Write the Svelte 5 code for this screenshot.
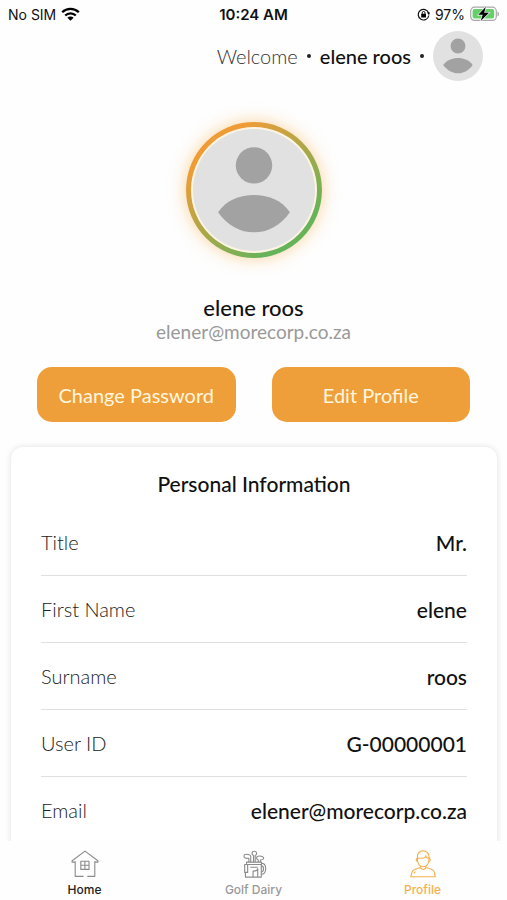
<script lang="ts">
    const user = {
        name: "elene roos",
        email: "elener@morecorp.co.za",
    };

    const details = [
        { label: "Title", value: "Mr." },
        { label: "First Name", value: "elene" },
        { label: "Surname", value: "roos" },
        { label: "User ID", value: "G-00000001" },
        { label: "Email", value: user.email },
    ];
</script>

{#snippet person()}
    <svg class="person" viewBox="0 0 124 124" aria-hidden="true">
        <circle cx="62" cy="62" r="62" fill="#e1e1e1" />
        <circle cx="62" cy="37" r="18.5" fill="#a2a2a2" />
        <path
            d="M25.500 84.500C34 72 48 67 62 67s28 5 36.500 17.500C89 98 76 105 62 105S35 98 25.500 84.500z"
            fill="#a2a2a2"
        />
    </svg>
{/snippet}

<div class="screen">
    <div class="status-bar">
        <div class="status-side">
            <span>No SIM</span>
            <svg width="19" height="14" viewBox="0 0 19 14" aria-hidden="true">
                <g fill="none" stroke="#000" stroke-width="2.300">
                    <path d="M1.200 5.300a11.800 11.800 0 0 1 16.600 0" />
                    <path d="M4.200 8.500a7.500 7.500 0 0 1 10.600 0" />
                </g>
                <path d="M6.400 10.700a4.400 4.400 0 0 1 6.200 0L9.500 13.800z" />
            </svg>
        </div>
        <span class="clock">10:24 AM</span>
        <div class="status-side end">
            <svg width="13" height="13" viewBox="0 0 13 13" aria-hidden="true">
                <path
                    d="M11.800 7.500A5.300 5.300 0 1 1 11.600 5"
                    fill="none"
                    stroke="#111"
                    stroke-width="1.200"
                />
                <path d="M10 4.600h3l-1 2.700z" />
                <rect x="4.200" y="5.800" width="4.800" height="3.600" rx=".5" />
                <path
                    d="M5.200 6V4.900a1.400 1.400 0 0 1 2.800 0V6"
                    fill="none"
                    stroke="#111"
                    stroke-width="1"
                />
            </svg>
            <span>97%</span>
            <svg width="29" height="16" viewBox="0 0 29 16" aria-hidden="true">
                <rect
                    x=".7"
                    y="1.200"
                    width="25.600"
                    height="13.200"
                    rx="3.800"
                    fill="#fff"
                    stroke="#a9a9a9"
                    stroke-width="1.200"
                />
                <rect x="2.600" y="3" width="21.500" height="9.600" rx="2" fill="#65cf69" />
                <path d="M27.500 5.500c2 .8 2 4 0 4.800z" fill="#a9a9a9" />
                <path
                    d="M15.800.8 8.300 8.800h4.400l-2 6.200 8.300-8.200h-4.800z"
                    stroke="#fff"
                    stroke-width="1.200"
                    paint-order="stroke"
                />
            </svg>
        </div>
    </div>

    <header class="welcome">
        <span class="greeting">Welcome</span>
        <span class="dot"></span>
        <span class="welcome-name">{user.name}</span>
        <span class="dot"></span>
        <a class="avatar-small" href="#profile" aria-label="Profile">
            {@render person()}
        </a>
    </header>

    <main>
        <section class="profile">
            <div class="avatar">
                {@render person()}
            </div>
            <h1>{user.name}</h1>
            <p class="email">{user.email}</p>
            <div class="actions">
                <button type="button">Change Password</button>
                <button type="button">Edit Profile</button>
            </div>
        </section>

        <section class="card">
            <h2>Personal Information</h2>
            <dl>
                {#each details as item}
                    <div class="row">
                        <dt>{item.label}</dt>
                        <dd>{item.value}</dd>
                    </div>
                {/each}
            </dl>
        </section>
    </main>

    <nav class="tabs">
        <a class="tab home" href="#home">
            <svg viewBox="0 0 30 30" aria-hidden="true">
                <path d="M4.500 12v16.200h9M17.500 28.200h8V12" />
                <path d="M4.500 13H1.200v-1.500L15 1.200l13.800 10.300V13h-3.300" />
                <path d="M10.500 12h8.800v8.800h-8.800zM14.900 12v8.800M10.500 16.400h8.800" />
            </svg>
            <span>Home</span>
        </a>
        <a class="tab golf" href="#diary">
            <svg viewBox="0 0 30 30" aria-hidden="true">
                <path d="M7 13h16v2.500H7zM5 15.500h3.200v8.500H5zM5.800 24v5h17V15.500" />
                <path d="M22.800 14c4 0 4.700 3 4.700 6s-1 6-4.700 6" />
                <path d="M22.800 17c2 0 2.400 1.500 2.400 3s-.4 3.500-2.400 3.500" />
                <path d="M14 29v-6.500c2 .3 5-.5 5-2.500v9M11 18.500h8" />
                <path d="M9.500 13V9L6 8.700c-2.700-.5-2.200-4.200.5-4.200 2.200 0 5 .8 5 2.500v6" />
                <path d="M14.500 13V6c-2.200-1-2.400-4.600.8-4.600 3 0 3.200 3.400 1 4.600v7" />
                <path d="M19.500 13v-2.500c-2.500-.5-2.500-3.800.5-4 3.200-.3 6.200 1 5.200 3-.5 1.200-2 1.200-3.400 1.200V13" />
            </svg>
            <span>Golf Dairy</span>
        </a>
        <a class="tab active" href="#profile" aria-current="page">
            <svg viewBox="0 0 30 30" aria-hidden="true">
                <path d="M9 9.500V7c0-3.500 2.500-6 6-6s6.500 2.500 6.500 6v2.500c0 5-2.500 8.500-6.300 8.500S9 14.500 9 9.500z" />
                <path d="M9.500 8.800h4c3 0 4.500-1 4.500-2.600 0 1.800 1.500 2.600 3.500 2.600" />
                <path d="M9 9c-1.800 0-1.800 3.500.5 3.500M21.500 9c1.800 0 1.800 3.500-.5 3.500" />
                <path d="M12.500 17v2.500c1.500 1.800 4 1.800 5.500 0V17" />
                <path d="M12 18.800l-6 2C3.500 21.800 2.500 24 2.300 28M18.500 18.800l6 2c2.500 1 3.200 3.200 3.400 7.200" />
                <path d="M1 28.700h28M5.500 25.500c0-1 .5-1.800 1.200-2.300" />
            </svg>
            <span>Profile</span>
        </a>
    </nav>
</div>

<style>
    :global(body) {
        background: #fefefe;
    }

    .screen {
        display: flex;
        flex-direction: column;
        height: 100vh;
        color: #111;
        font-family: Lato, "Open Sans", sans-serif;
    }

    a {
        color: inherit;
        text-decoration: none;
    }

    .status-bar {
        display: flex;
        align-items: center;
        flex-shrink: 0;
        height: 28px;
        padding: 0 8px;
        font-family: Inter, Roboto, sans-serif;
        font-size: 14px;
    }

    .status-side {
        display: flex;
        flex: 1;
        align-items: center;
        gap: 5px;
    }

    .status-side.end {
        justify-content: flex-end;
    }

    .clock {
        font-size: 15px;
        font-weight: 600;
    }

    .welcome {
        display: flex;
        align-items: center;
        justify-content: flex-end;
        flex-shrink: 0;
        gap: 9px;
        height: 56px;
        padding-right: 24px;
        font-size: 20px;
    }

    .greeting {
        color: #333;
        font-weight: 300;
    }

    .welcome-name {
        font-weight: 500;
    }

    .dot {
        width: 4px;
        height: 4px;
        border-radius: 50%;
        background: #222;
    }

    .avatar-small {
        width: 50px;
        height: 50px;
    }

    .person {
        display: block;
        width: 100%;
        height: 100%;
    }

    main {
        flex: 1;
        min-height: 0;
        overflow-y: auto;
        scrollbar-width: none;
    }

    .profile {
        display: flex;
        flex-direction: column;
        align-items: center;
        padding: 38px 37px 25px;
    }

    .avatar {
        box-sizing: border-box;
        width: 136px;
        height: 136px;
        padding: 2px;
        border: 5px solid transparent;
        border-radius: 50%;
        background:
            linear-gradient(#fdf5e4, #fdf5e4) padding-box,
            linear-gradient(140deg, #f09c36 20%, #67b35a 80%) border-box;
        box-shadow: 0 0 16px 1px rgba(250, 180, 80, 0.5);
    }

    h1,
    h2,
    p,
    dl,
    dd {
        margin: 0;
    }

    h1 {
        margin-top: 36px;
        font-size: 22px;
        font-weight: 500;
        line-height: 28px;
    }

    .email {
        color: #999;
        font-size: 19px;
        line-height: 20px;
    }

    .actions {
        display: grid;
        grid-template-columns: 1fr 1fr;
        gap: 36px;
        width: 100%;
        margin-top: 25px;
    }

    button {
        height: 55px;
        padding: 0;
        border: none;
        border-radius: 15px;
        background: #ef9f39;
        color: #fff6df;
        font: inherit;
        font-size: 20px;
        cursor: pointer;
    }

    .card {
        margin: 0 10px 24px 11px;
        padding: 24px 30px;
        border-radius: 12px;
        background: #fff;
        box-shadow: 0 0 6px rgba(0, 0, 0, 0.12);
    }

    h2 {
        margin-bottom: 12px;
        font-size: 21px;
        font-weight: 500;
        line-height: 26px;
        text-align: center;
    }

    .row {
        display: flex;
        align-items: center;
        justify-content: space-between;
        height: 66px;
        border-bottom: 1px solid #e0e0e0;
    }

    .row:last-child {
        border-bottom: none;
    }

    dt {
        color: #222;
        font-size: 20px;
        font-weight: 300;
    }

    dd {
        font-size: 21px;
        font-weight: 500;
    }

    .tabs {
        display: grid;
        grid-template-columns: repeat(3, 1fr);
        flex-shrink: 0;
        height: 59px;
        background: #fefefe;
    }

    .tab {
        display: flex;
        flex-direction: column;
        align-items: center;
        gap: 4px;
        padding-top: 9px;
        color: #999;
        font-family: Inter, Roboto, sans-serif;
        font-size: 12px;
        font-weight: 500;
        line-height: 16px;
    }

    .tab svg {
        width: 28px;
        height: 28px;
        fill: none;
        stroke: #8c8c8c;
        stroke-width: 1.2;
        stroke-linejoin: round;
    }

    .tab.home {
        color: #222;
    }

    .tab.active {
        color: #f3b14c;
    }

    .tab.active svg {
        stroke: #f3b14c;
    }
</style>
